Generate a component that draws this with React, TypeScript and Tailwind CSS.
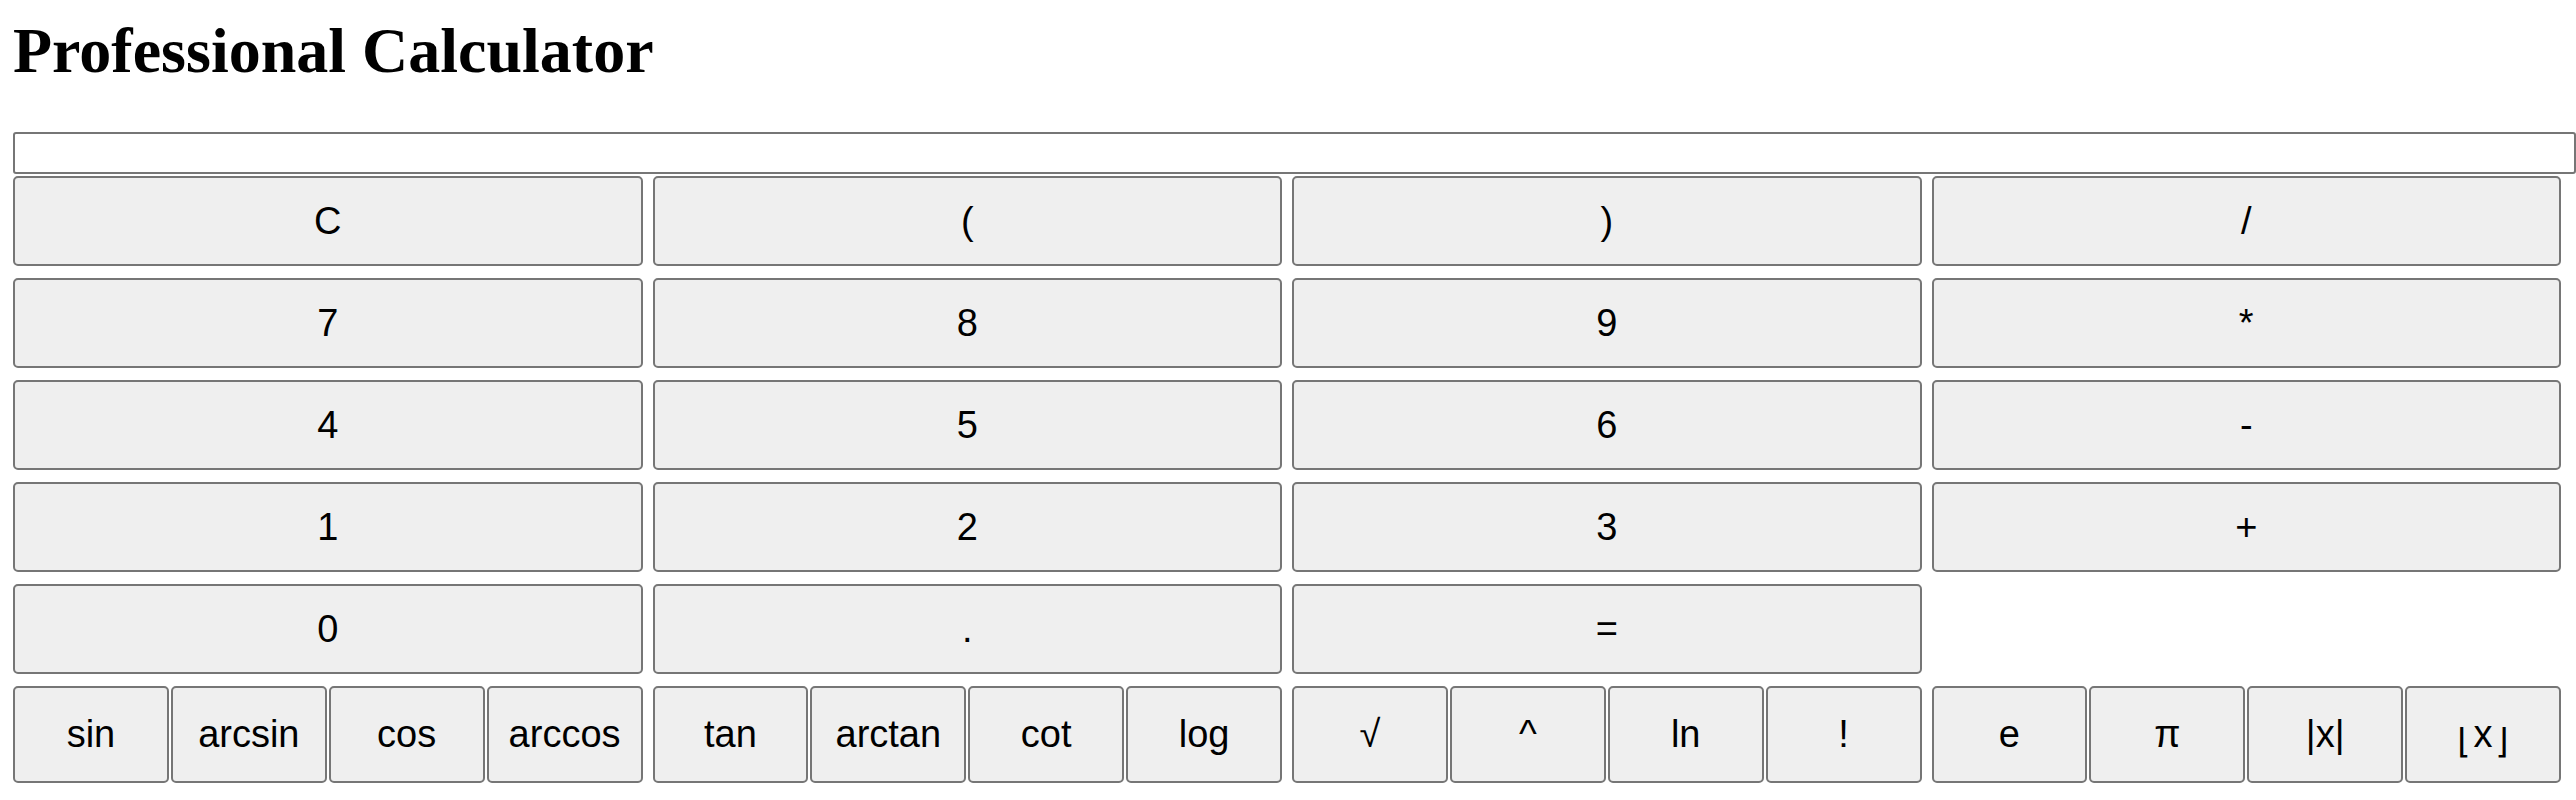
const mainKeys = ['C', '(', ')', '/', '7', '8', '9', '*', '4', '5', '6', '-', '1', '2', '3', '+', '0', '.', '='];

const funcGroups = [
  ['sin', 'arcsin', 'cos', 'arccos'],
  ['tan', 'arctan', 'cot', 'log'],
  ['√', '^', 'ln', '!'],
  ['e', 'π', '|x|', '⌊x⌋'],
];

const btn =
  'flex items-center justify-center bg-[#efefef] border-2 border-[#767676] rounded-[5px] text-black text-[38px] font-["Liberation_Sans",Arial,sans-serif]';

function Label({ text }: { text: string }) {
  // floor brackets come out small and low in the reference
  if (text === '⌊x⌋') {
    return (
      <span className="flex items-baseline">
        <span className='text-[34px] font-["DejaVu_Sans",sans-serif] translate-y-[6px] mr-[3px]'>⌊</span>
        <span>x</span>
        <span className='text-[34px] font-["DejaVu_Sans",sans-serif] translate-y-[6px] ml-[3px]'>⌋</span>
      </span>
    );
  }
  return <>{text}</>;
}

export default function App() {
  return (
    <div className="bg-white min-h-[800px] pl-[13px]">
      <h1 className='pt-[14px] h-[88px] leading-[74px] text-[64px] font-bold text-black font-["Liberation_Serif","Times_New_Roman",serif]'>
        Professional Calculator
      </h1>

      {/* display */}
      <input
        type="text"
        readOnly
        className="mt-[44px] mb-[2px] block w-[2563px] h-[42px] border-2 border-[#767676] rounded-[3px] bg-white"
      />

      {/* keypad */}
      <div className="w-[2548px] grid grid-cols-4 gap-x-[10px] gap-y-[12px]">
        {mainKeys.map((k) => (
          <button key={k} className={`${btn} h-[90px]`}>
            {k}
          </button>
        ))}
        <div />
        {funcGroups.map((group, gi) => (
          <div key={gi} className="grid grid-cols-4 gap-x-[2px]">
            {group.map((f) => (
              <button key={f} className={`${btn} h-[97px]`}>
                <Label text={f} />
              </button>
            ))}
          </div>
        ))}
      </div>
    </div>
  );
}
